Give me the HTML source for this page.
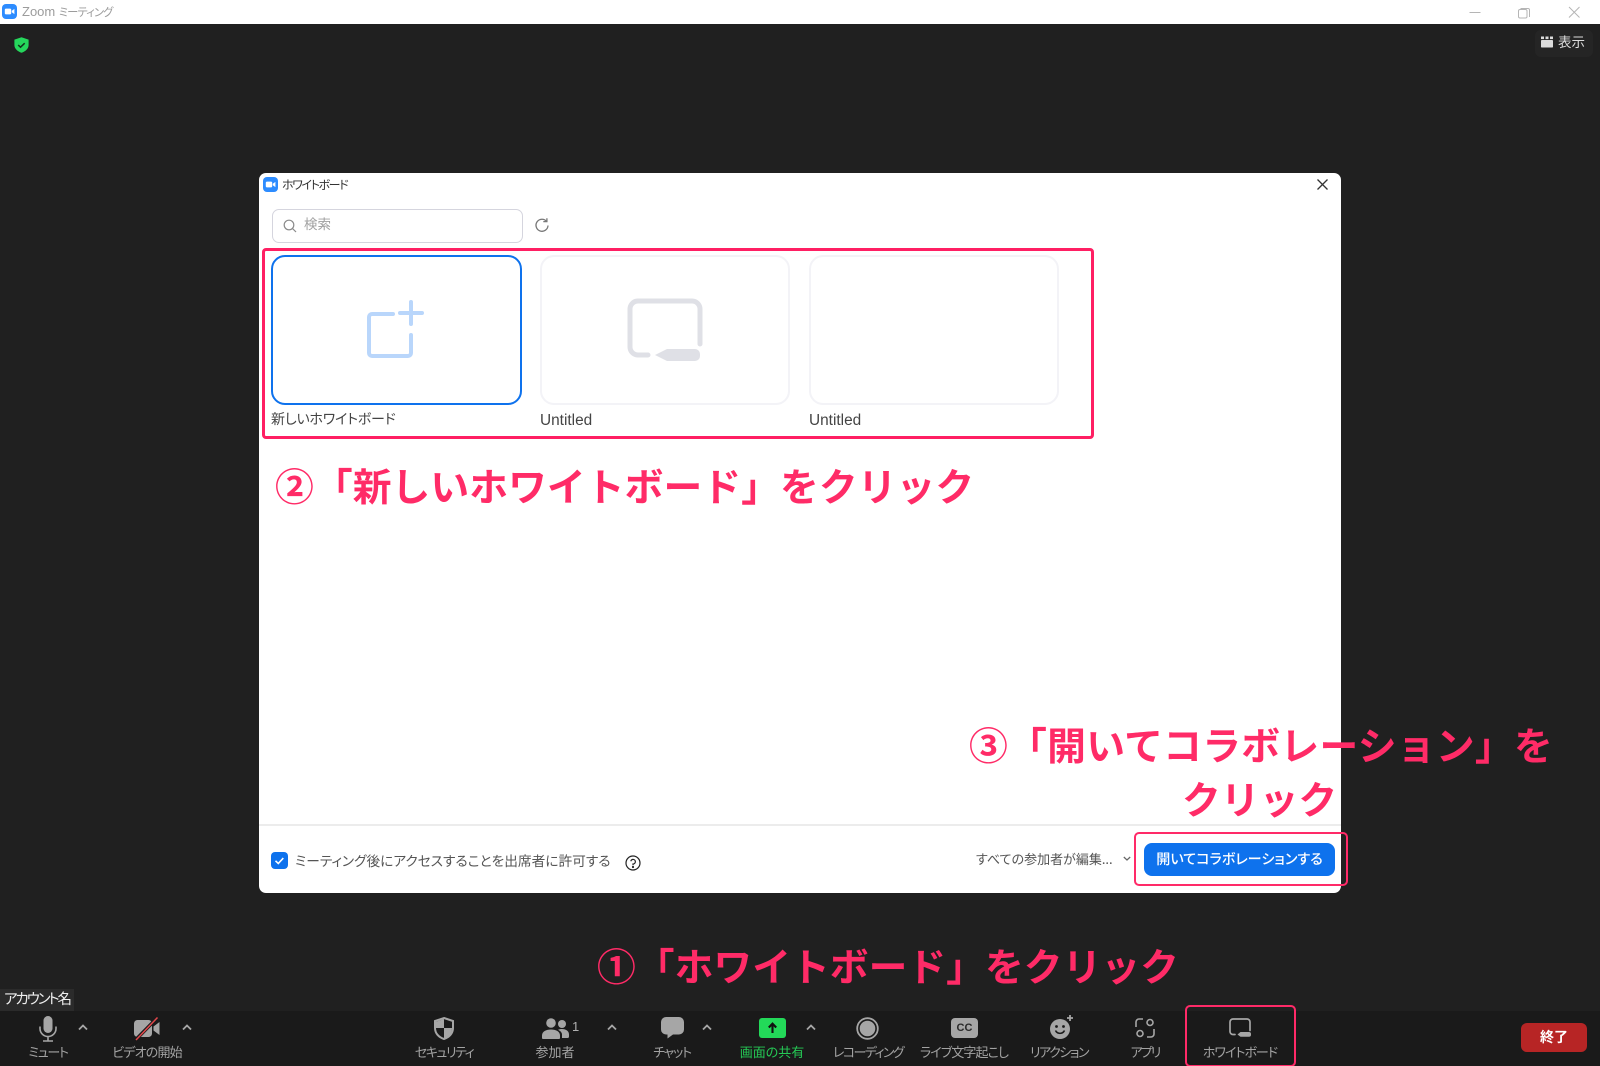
<!DOCTYPE html>
<html lang="ja"><head><meta charset="utf-8"><title>Zoom ミーティング</title>
<style>
html,body{margin:0;padding:0;width:1600px;height:1066px;overflow:hidden;background:#202020}
body{position:relative;font-family:"Liberation Sans","Noto Sans CJK JP",sans-serif}
.a{position:absolute}
.t{position:absolute;white-space:nowrap;font-family:"Noto Sans CJK JP",sans-serif;font-feature-settings:"palt";line-height:1}
.lb{position:absolute;top:1044px;width:120px;text-align:center;font-size:13px;color:#a3a3a3;white-space:nowrap;font-family:"Noto Sans CJK JP",sans-serif;font-feature-settings:"palt";line-height:15px}
.ann{position:absolute;white-space:nowrap;font-family:"Noto Sans CJK JP",sans-serif;font-weight:700;font-size:38.8px;line-height:1;color:#ff2b67}
.card{position:absolute;top:255px;width:250px;height:150px;border:2px solid #f3f3f7;border-radius:14px;box-sizing:border-box}
svg{position:absolute;overflow:visible;display:block}
.box{position:absolute;box-sizing:border-box;border:3px solid #ff1f63;border-radius:4px}
</style></head><body>

<!-- title bar -->
<div class="a" style="left:0;top:0;width:1600px;height:24px;background:#fff"></div>
<svg style="left:2px;top:4px" width="15" height="15" viewBox="0 0 15 15"><rect width="15" height="15" rx="4" fill="#2d8cff"/><rect x="2.8" y="4.6" width="6.4" height="5.8" rx="1.2" fill="#fff"/><path d="M9.8 6.8l2.6-1.9v5.2l-2.6-1.9z" fill="#fff"/></svg>
<div class="t" style="left:22px;top:5px;font-size:13px;color:#9c9c9c;font-family:'Liberation Sans','Noto Sans CJK JP',sans-serif">Zoom <span style="font-size:11.3px;letter-spacing:-.9px;font-family:'Noto Sans CJK JP',sans-serif">ミーティング</span></div>
<svg style="left:1460px;top:0" width="130" height="24" fill="none" stroke="#b5b5b5" stroke-width="1"><path d="M9.5 12.5h11"/><path d="M60.5 8.5h7.5a1.5 1.5 0 0 1 1.5 1.5v7"/><rect x="58.5" y="9.5" width="8.5" height="8.5" rx="1.5"/><path d="M109 7l10.5 10.5M119.5 7L109 17.5"/></svg>

<!-- shield -->
<svg style="left:14px;top:37px" width="15" height="16" viewBox="0 0 15 16"><path d="M7.5 0.3L14.6 2.6V8c0 3.8-3.2 6.4-7.1 7.8C3.6 14.4.4 11.8.4 8V2.6z" fill="#25d75c"/><path d="M4.2 8l2.3 2.2 4.2-4" fill="none" stroke="#12331d" stroke-width="1.5"/></svg>

<!-- view btn -->
<div class="a" style="left:1535px;top:30px;width:58px;height:27px;border-radius:6px;background:#252525"></div>
<svg style="left:1541px;top:36px" width="12" height="12" viewBox="0 0 12 12" fill="#dcdcdc"><rect x="0" y="0.5" width="3" height="2.6"/><rect x="4.5" y="0.5" width="3" height="2.6"/><rect x="9" y="0.5" width="3" height="2.6"/><rect x="0" y="4" width="12" height="7.5" rx="0.8"/></svg>
<div class="t" style="left:1558px;top:35px;font-size:13.5px;color:#dcdcdc">表示</div>

<!-- dialog -->
<div class="a" style="left:259px;top:173px;width:1082px;height:720px;background:#fff;border-radius:7px"></div>
<svg style="left:263px;top:177px" width="15" height="15" viewBox="0 0 15 15"><rect width="15" height="15" rx="4" fill="#2d8cff"/><rect x="2.8" y="4.6" width="6.4" height="5.8" rx="1.2" fill="#fff"/><path d="M9.8 6.8l2.6-1.9v5.2l-2.6-1.9z" fill="#fff"/></svg>
<div class="t" style="left:282px;top:179px;font-size:12px;letter-spacing:-1.4px;color:#333">ホワイトボード</div>
<svg style="left:1317px;top:179px" width="11" height="11" fill="none" stroke="#333" stroke-width="1.3"><path d="M.5.5l10 10M10.500.5l-10 10"/></svg>

<!-- search -->
<div class="a" style="left:272px;top:209px;width:251px;height:34px;box-sizing:border-box;border:1.5px solid #d5d5de;border-radius:7px"></div>
<svg style="left:283px;top:219px" width="14" height="14" fill="none" stroke="#8a8a8a" stroke-width="1.2"><circle cx="6" cy="6" r="4.8"/><path d="M9.5 9.5l3.5 3.5"/></svg>
<div class="t" style="left:304px;top:217px;font-size:13.5px;color:#a0a0a0">検索</div>
<svg style="left:535px;top:218px" width="14" height="14" viewBox="0 0 14 14" fill="none" stroke="#777" stroke-width="1.3"><path d="M11.6 3.4A6 6 0 1 0 13 7.5"/><path d="M8.3 3.6h3.6V0.2" /></svg>

<!-- cards -->
<div class="card" style="left:540px"></div>
<div class="card" style="left:809px"></div>
<div class="a" style="left:271px;top:255px;width:251px;height:150px;box-sizing:border-box;border:2px solid #0e72ed;border-radius:14px"></div>

<svg style="left:360px;top:295px" width="70" height="70" fill="none" stroke="#b9d6fb" stroke-width="4" stroke-linecap="round" stroke-linejoin="round"><path d="M33 19H12a3 3 0 0 0-3 3v36a3 3 0 0 0 3 3h36a3 3 0 0 0 3-3V40"/><path d="M40 18h22M51 7v22"/></svg>
<svg style="left:622px;top:292px" width="86" height="75" fill="none" stroke="#dfe0e6" stroke-width="5" stroke-linecap="round"><path d="M26 63H16a8 8 0 0 1-8-8V17a8 8 0 0 1 8-8h54a8 8 0 0 1 8 8v35"/><path d="M33 63l12-6h28a5 5 0 0 1 5 5v2a5 5 0 0 1-5 5H45z" fill="#dfe0e6" stroke="none"/></svg>

<div class="t" style="left:271px;top:412px;font-size:14px;letter-spacing:-.2px;color:#444">新しいホワイトボード</div>
<div class="t" style="left:540px;top:413px;font-size:15.4px;color:#444;font-family:'Liberation Sans',sans-serif">Untitled</div>
<div class="t" style="left:809px;top:413px;font-size:15.4px;color:#444;font-family:'Liberation Sans',sans-serif">Untitled</div>

<div class="box" style="left:262px;top:248px;width:832px;height:191px"></div>

<!-- footer -->
<div class="a" style="left:259px;top:824px;width:1082px;height:2px;background:#ececec"></div>
<div class="a" style="left:271px;top:852px;width:17px;height:17px;border-radius:4px;background:#0e72ed"></div>
<svg style="left:271px;top:852px" width="17" height="17" fill="none" stroke="#fff" stroke-width="1.6"><path d="M4.5 8.8l2.8 2.7 5-5.4"/></svg>
<div class="t" style="left:295px;top:854px;font-size:13.7px;color:#555">ミーティング後にアクセスすることを出席者に許可する</div>
<svg style="left:625px;top:855px" width="16" height="16" fill="none" stroke="#222" stroke-width="1.2"><circle cx="8" cy="8" r="7"/><path d="M5.8 6.2A2.3 2.3 0 1 1 8 9v1.2"/><circle cx="8" cy="12" r=".5" fill="#222"/></svg>
<div class="t" style="left:976px;top:852px;font-size:13px;color:#555">すべての参加者が編集...</div>
<svg style="left:1123px;top:856px" width="8" height="6" fill="none" stroke="#666" stroke-width="1.2"><path d="M.8 1l3.2 3 3.2-3"/></svg>
<div class="a" style="left:1144px;top:843px;width:191px;height:33px;background:#0e72ed;border-radius:8px"></div>
<div class="t" style="left:1144px;top:852px;width:191px;text-align:center;font-size:14.1px;font-weight:500;color:#fff">開いてコラボレーションする</div>
<div class="box" style="left:1134px;top:832px;width:214px;height:54px;border-width:2.5px;border-radius:5px;border-color:#ff2a68"></div>

<!-- annotations -->
<div class="ann" style="left:275px;top:466px;letter-spacing:.05px">②「新しいホワイトボード」をクリック</div>
<div class="ann" style="left:969px;top:725px;letter-spacing:.27px">③「開いてコラボレーション」を</div>
<div class="ann" style="left:1182px;top:779px">クリック</div>
<div class="ann" style="left:597px;top:946px">①「ホワイトボード」をクリック</div>

<!-- account -->
<div class="a" style="left:0;top:989px;width:74px;height:22px;background:#2b2b2b"></div>
<div class="t" style="left:4px;top:992px;font-size:14.5px;letter-spacing:-2.1px;color:#eee">アカウント名</div>

<!-- toolbar -->
<div class="a" style="left:0;top:1011px;width:1600px;height:55px;background:#1a1a1a"></div>

<!-- mic -->
<svg style="left:36px;top:1016px" width="24" height="26" fill="none" stroke="#a6a6a6" stroke-width="1.6"><rect x="7.5" y="0" width="9" height="17" rx="4.5" fill="#a6a6a6" stroke="none"/><path d="M4 10.5v2a8 8 0 0 0 16 0v-2M12 20.5v4M7 25h10"/></svg>
<!-- video -->
<svg style="left:133px;top:1017px" width="28" height="24" fill="#a6a6a6"><rect x="1" y="3" width="18" height="17" rx="3.5"/><path d="M20.5 9.5l6-4.5v13l-6-4.5z"/><path d="M2 23.5L25 0" stroke="#1a1a1a" stroke-width="3.4"/><path d="M3 23L24.5 0.5" stroke="#e2474b" stroke-width="1.5"/></svg>
<!-- shield -->
<svg style="left:434px;top:1017px" width="20" height="23" viewBox="0 0 20 23"><path d="M10 1L19 4V11c0 5.5-4 9.4-9 11C5 20.4 1 16.500 1 11V4z" fill="none" stroke="#a6a6a6" stroke-width="2"/><path d="M10 2L2 4.800V11h8zM10 11v10.500c4.500-1.500 8-5 8-10.500z" fill="#a6a6a6"/></svg>
<!-- people -->
<svg style="left:542px;top:1018px" width="27" height="21" fill="#a6a6a6"><circle cx="9" cy="5" r="4.800"/><path d="M0 20v-2.500C0 13.500 4 11.500 9 11.500s9 2 9 6V20a1 1 0 0 1-1 1H1a1 1 0 0 1-1-1z"/><circle cx="20" cy="6" r="4"/><path d="M16 11.800c1-.5 2.500-.8 4-.8 4 0 7 2 7 5.500v2a1.500 1.500 0 0 1-1.500 1.500H20v-3.500c0-1.800-1.500-3.500-4-4.700z"/></svg>
<div class="t" style="left:572px;top:1020px;font-size:13px;color:#b0b0b0;font-family:'Liberation Sans',sans-serif">1</div>
<!-- chat -->
<svg style="left:661px;top:1017px" width="23" height="22" fill="#a6a6a6"><path d="M5 0h13a5 5 0 0 1 5 5v7.500a5 5 0 0 1-5 5h-6l-5.500 4v-4H5a5 5 0 0 1-5-5V5a5 5 0 0 1 5-5z"/></svg>
<!-- share -->
<svg style="left:759px;top:1018px" width="27" height="20"><rect width="27" height="20" rx="3" fill="#23d959"/><path d="M13.500 15V6M9.800 9.500l3.700-3.900 3.700 3.900" fill="none" stroke="#111" stroke-width="2.100"/></svg>
<!-- record -->
<svg style="left:856px;top:1017px" width="23" height="23"><circle cx="11.500" cy="11.500" r="10.300" fill="none" stroke="#a6a6a6" stroke-width="1.800"/><circle cx="11.500" cy="11.500" r="7.800" fill="#a6a6a6"/></svg>
<!-- cc -->
<div class="a" style="left:951px;top:1018px;width:27px;height:20px;border-radius:4px;background:#a6a6a6;color:#2a2a2a;font:700 11px/20px 'Liberation Sans',sans-serif;text-align:center">CC</div>
<!-- reaction -->
<svg style="left:1050px;top:1015px" width="24" height="24" fill="#a6a6a6"><circle cx="10" cy="14" r="10"/><circle cx="6.500" cy="11.500" r="1.400" fill="#1a1a1a"/><circle cx="13.500" cy="11.500" r="1.400" fill="#1a1a1a"/><path d="M5.500 15.500a5 5 0 0 0 9 0" fill="none" stroke="#1a1a1a" stroke-width="1.500"/><path d="M20 0v6M17 3h6" stroke="#a6a6a6" stroke-width="1.800"/></svg>
<!-- apps -->
<svg style="left:1135px;top:1018px" width="20" height="20" fill="none" stroke="#a6a6a6" stroke-width="1.600"><path d="M1 9V4a3 3 0 0 1 3-3h4M19 11v5a3 3 0 0 1-3 3h-4"/><circle cx="15" cy="4.500" r="3"/><circle cx="5" cy="15.500" r="3"/></svg>
<!-- whiteboard -->
<svg style="left:1229px;top:1018px" width="22" height="19" fill="none" stroke="#a6a6a6" stroke-width="1.700" stroke-linecap="round"><path d="M6 16.500H4a3 3 0 0 1-3-3V4a3 3 0 0 1 3-3h14a3 3 0 0 1 3 3v8.500"/><path d="M8.500 16.500l3-2.500h8.500a2 2 0 0 1 2 2v.8a2 2 0 0 1-2 2h-8.500z" fill="#a6a6a6" stroke="none"/></svg>

<!-- carets -->
<svg style="left:0;top:1023px" width="900" height="10" fill="none" stroke="#a6a6a6" stroke-width="1.800"><path d="M79 6.500l4-4 4 4M183 6.500l4-4 4 4M608 6.500l4-4 4 4M703 6.500l4-4 4 4M807 6.500l4-4 4 4"/></svg>

<div class="lb" style="left:-12px;letter-spacing:-1.3px">ミュート</div>
<div class="lb" style="left:87px;letter-spacing:-.85px">ビデオの開始</div>
<div class="lb" style="left:384px;letter-spacing:-1.5px">セキュリティ</div>
<div class="lb" style="left:495px">参加者</div>
<div class="lb" style="left:612px;letter-spacing:-1.25px">チャット</div>
<div class="lb" style="left:712px;color:#25c955">画面の共有</div>
<div class="lb" style="left:808px;letter-spacing:-1.6px">レコーディング</div>
<div class="lb" style="left:904px;letter-spacing:-.9px">ライブ文字起こし</div>
<div class="lb" style="left:999px;letter-spacing:-1.5px">リアクション</div>
<div class="lb" style="left:1085px;letter-spacing:-2px">アプリ</div>
<div class="lb" style="left:1180px;letter-spacing:-1px">ホワイトボード</div>

<div class="a" style="left:1521px;top:1023px;width:66px;height:29px;border-radius:6px;background:#b72525"></div>
<div class="t" style="left:1521px;top:1030px;width:66px;text-align:center;font-size:14px;font-weight:700;color:#fff">終了</div>

<div class="box" style="left:1185px;top:1005px;width:111px;height:62px;border-width:2.500px;border-color:#ff2a68;border-radius:5px"></div>
</body></html>
